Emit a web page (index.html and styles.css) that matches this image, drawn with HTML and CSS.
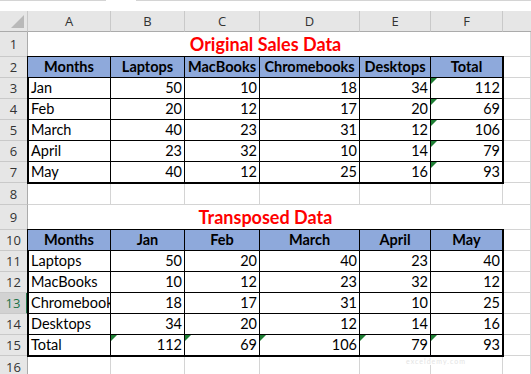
FILE: index.html
```html
<!DOCTYPE html>
<html>
<head>
<meta charset="utf-8">
<link rel="stylesheet" href="styles.css">
</head>
<body>
<div class="sheet">
  <div class="topbar"><span class="tb tb1"></span><span class="tb tb2"></span></div>
  <div class="grid">
    <div class="corner"><svg width="27" height="20" viewBox="0 0 27 20"><polygon points="24,4 24,17 11,17" fill="#b9b9b9"/></svg></div>
    <div class="ch">A</div><div class="ch">B</div><div class="ch">C</div><div class="ch">D</div><div class="ch">E</div><div class="ch">F</div><div class="ch ch-g"></div>

    <div class="rh">1</div>
    <div class="title">Original Sales Data</div>
    <div class="c"></div>

    <div class="rh">2</div>
    <div class="tbl">
      <div class="t hd">Months</div><div class="t hd">Laptops</div><div class="t hd">MacBooks</div><div class="t hd">Chromebooks</div><div class="t hd">Desktops</div><div class="t hd">Total</div>
      <div class="t tx">Jan</div><div class="t n">50</div><div class="t n">10</div><div class="t n">18</div><div class="t n">34</div><div class="t n flag">112</div>
      <div class="t tx">Feb</div><div class="t n">20</div><div class="t n">12</div><div class="t n">17</div><div class="t n">20</div><div class="t n flag">69</div>
      <div class="t tx">March</div><div class="t n">40</div><div class="t n">23</div><div class="t n">31</div><div class="t n">12</div><div class="t n flag">106</div>
      <div class="t tx">April</div><div class="t n">23</div><div class="t n">32</div><div class="t n">10</div><div class="t n">14</div><div class="t n flag">79</div>
      <div class="t tx">May</div><div class="t n">40</div><div class="t n">12</div><div class="t n">25</div><div class="t n">16</div><div class="t n flag">93</div>
    </div>
    <div class="c"></div>
    <div class="rh">3</div><div class="c"></div>
    <div class="rh">4</div><div class="c"></div>
    <div class="rh">5</div><div class="c"></div>
    <div class="rh">6</div><div class="c"></div>
    <div class="rh">7</div><div class="c"></div>

    <div class="rh">8</div>
    <div class="c"></div><div class="c"></div><div class="c"></div><div class="c"></div><div class="c"></div><div class="c"></div><div class="c"></div>

    <div class="rh">9</div>
    <div class="title">Transposed Data</div>
    <div class="c"></div>

    <div class="rh">10</div>
    <div class="tbl">
      <div class="t hd">Months</div><div class="t hd">Jan</div><div class="t hd">Feb</div><div class="t hd">March</div><div class="t hd">April</div><div class="t hd">May</div>
      <div class="t tx">Laptops</div><div class="t n">50</div><div class="t n">20</div><div class="t n">40</div><div class="t n">23</div><div class="t n">40</div>
      <div class="t tx">MacBooks</div><div class="t n">10</div><div class="t n">12</div><div class="t n">23</div><div class="t n">32</div><div class="t n">12</div>
      <div class="t tx">Chromebooks</div><div class="t n">18</div><div class="t n">17</div><div class="t n">31</div><div class="t n">10</div><div class="t n">25</div>
      <div class="t tx">Desktops</div><div class="t n">34</div><div class="t n">20</div><div class="t n">12</div><div class="t n">14</div><div class="t n">16</div>
      <div class="t tx">Total</div><div class="t n flag">112</div><div class="t n flag">69</div><div class="t n flag">106</div><div class="t n flag">79</div><div class="t n flag">93</div>
    </div>
    <div class="c"></div>
    <div class="rh">11</div><div class="c"></div>
    <div class="rh">12</div><div class="c"></div>
    <div class="rh rh-sel">13</div><div class="c"></div>
    <div class="rh">14</div><div class="c"></div>
    <div class="rh">15</div><div class="c"></div>

    <div class="rh">16</div>
    <div class="c"></div><div class="c"></div><div class="c"></div><div class="c"></div><div class="c"></div><div class="c"></div><div class="c"></div>
  </div>
  <div class="watermark">exceldemy.com</div>
</div>
</body>
</html>
```
FILE: styles.css
```css
html, body {
  margin: 0;
  padding: 0;
  background: #fff;
}
body {
  width: 531px;
  height: 374px;
  overflow: hidden;
  font-family: Lato, "Open Sans", sans-serif;
}
.sheet {
  position: relative;
  width: 531px;
  height: 374px;
  overflow: hidden;
}
.topbar {
  height: 11px;
  display: flex;
}
.tb {
  height: 1px;
  background: #d4d4d4;
}
.tb1 { width: 106px; }
.tb2 { margin-left: 30px; flex: 1; }

.grid {
  display: grid;
  grid-template-columns: 28px 83px 74px 75px 100px 71px 72px 28px;
  grid-template-rows: 21px 25px 21px 21px 21px 21px 21px 21px 22px 25px 21px 21px 21px 21px 21px 21px 22px;
}
.corner {
  background: #e6e6e6;
  border-right: 1px solid #c9c9c9;
  border-bottom: 1px solid #ababab;
  box-sizing: border-box;
  display: flex;
}
.ch {
  background: #e6e6e6;
  border-right: 1px solid #c9c9c9;
  border-bottom: 1px solid #ababab;
  box-sizing: border-box;
  display: flex;
  align-items: center;
  justify-content: center;
  font-family: "Open Sans", sans-serif;
  font-size: 13px;
  color: #333;
}
.ch-g { border-right: none; }
.rh {
  background: #e6e6e6;
  border-right: 1px solid #ababab;
  border-bottom: 1px solid #c9c9c9;
  box-sizing: border-box;
  display: flex;
  align-items: center;
  justify-content: center;
  font-family: "Open Sans", sans-serif;
  font-size: 13px;
  color: #333;
}
.rh-sel {
  background: #d2d2d2;
  color: #217346;
  border-right: 2px solid #217346;
}
.c {
  border-right: 1px solid #d4d4d4;
  border-bottom: 1px solid #d4d4d4;
  box-sizing: border-box;
}
.title {
  grid-column: span 6;
  border-bottom: 1px solid #d4d4d4;
  box-sizing: border-box;
  display: flex;
  align-items: flex-end;
  justify-content: center;
  color: #ff0000;
  font-weight: 700;
  font-size: 18px;
  line-height: 22px;
  padding-bottom: 1px;
}
.tbl {
  grid-column: span 6;
  grid-row: span 6;
  display: grid;
  grid-template-columns: 83px 74px 75px 100px 71px 72px;
  grid-template-rows: repeat(6, 21px);
  outline: 2px solid #000;
  outline-offset: -1px;
  position: relative;
  z-index: 1;
}
.t {
  border-right: 1px solid #000;
  border-bottom: 1px solid #000;
  box-sizing: border-box;
  display: flex;
  align-items: flex-end;
  font-size: 14.5px;
  line-height: 18px;
  color: #000;
  white-space: nowrap;
  overflow: hidden;
  position: relative;
  padding-bottom: 1px;
}
.hd {
  background: #8ea9db;
  font-weight: 700;
  justify-content: center;
}
.tx {
  padding-left: 3px;
}
.n {
  justify-content: flex-end;
  padding-right: 2px;
}
.flag::before {
  content: "";
  position: absolute;
  left: 0;
  top: 0;
  border-top: 6px solid #1e7e34;
  border-right: 6px solid transparent;
}
.watermark {
  position: absolute;
  left: 372px;
  top: 357px;
  width: 128px;
  height: 8px;
  background: rgba(255,255,255,0.92);
  color: #e4e4e4;
  font-size: 7px;
  line-height: 8px;
  text-align: center;
  letter-spacing: 1px;
  z-index: 2;
}
```
